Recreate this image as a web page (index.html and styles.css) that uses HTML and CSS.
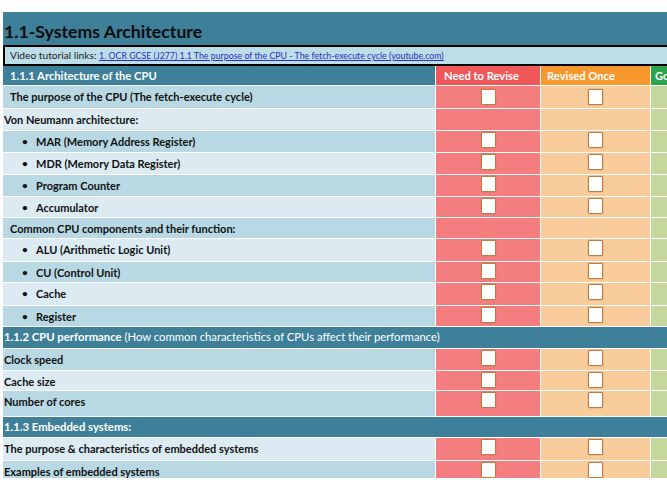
FILE: index.html
```html
<!DOCTYPE html>
<html lang="en">
<head>
<meta charset="utf-8">
<title>1.1-Systems Architecture</title>
<link rel="stylesheet" href="styles.css">
</head>
<body>
<div class="sheet">
  <div class="title">1.1-Systems Architecture</div>
  <div class="links">Video tutorial links: <a href="#">1. OCR GCSE (J277) 1.1 The purpose of the CPU - The fetch-execute cycle (youtube.com)</a></div>
  <div class="grid">
    <div class="hd hd-main">1.1.1 Architecture of the CPU</div>
    <div class="hd hd-red">Need to Revise</div>
    <div class="hd hd-orange">Revised Once</div>
    <div class="hd hd-green">Got it!</div>

    <div class="item dark ind">The purpose of the CPU (The fetch-execute cycle)</div>
    <div class="red"><span class="cb cb-low"></span></div>
    <div class="orange"><span class="cb cb-low"></span></div>
    <div class="green"></div>

    <div class="item light">Von Neumann architecture:</div>
    <div class="red"></div>
    <div class="orange"></div>
    <div class="green"></div>

    <div class="item dark"><span class="bul">•</span>MAR (Memory Address Register)</div>
    <div class="red"><span class="cb"></span></div>
    <div class="orange"><span class="cb"></span></div>
    <div class="green"></div>

    <div class="item light"><span class="bul">•</span>MDR (Memory Data Register)</div>
    <div class="red"><span class="cb"></span></div>
    <div class="orange"><span class="cb"></span></div>
    <div class="green"></div>

    <div class="item dark"><span class="bul">•</span>Program Counter</div>
    <div class="red"><span class="cb"></span></div>
    <div class="orange"><span class="cb"></span></div>
    <div class="green"></div>

    <div class="item light"><span class="bul">•</span>Accumulator</div>
    <div class="red"><span class="cb"></span></div>
    <div class="orange"><span class="cb"></span></div>
    <div class="green"></div>

    <div class="item dark ind">Common CPU components and their function:</div>
    <div class="red"></div>
    <div class="orange"></div>
    <div class="green"></div>

    <div class="item light"><span class="bul">•</span>ALU (Arithmetic Logic Unit)</div>
    <div class="red"><span class="cb"></span></div>
    <div class="orange"><span class="cb"></span></div>
    <div class="green"></div>

    <div class="item dark"><span class="bul">•</span>CU (Control Unit)</div>
    <div class="red"><span class="cb"></span></div>
    <div class="orange"><span class="cb"></span></div>
    <div class="green"></div>

    <div class="item light"><span class="bul">•</span>Cache</div>
    <div class="red"><span class="cb"></span></div>
    <div class="orange"><span class="cb"></span></div>
    <div class="green"></div>

    <div class="item dark"><span class="bul">•</span>Register</div>
    <div class="red"><span class="cb"></span></div>
    <div class="orange"><span class="cb"></span></div>
    <div class="green"></div>

    <div class="section"><b>1.1.2 CPU performance</b> (How common characteristics of CPUs affect their performance)</div>

    <div class="item dark">Clock speed</div>
    <div class="red"><span class="cb"></span></div>
    <div class="orange"><span class="cb"></span></div>
    <div class="green"></div>

    <div class="item light">Cache size</div>
    <div class="red"><span class="cb"></span></div>
    <div class="orange"><span class="cb"></span></div>
    <div class="green"></div>

    <div class="item dark tall">Number of cores</div>
    <div class="red"><span class="cb"></span></div>
    <div class="orange"><span class="cb"></span></div>
    <div class="green"></div>

    <div class="section"><b>1.1.3 Embedded systems:</b></div>

    <div class="item light">The purpose &amp; characteristics of embedded systems</div>
    <div class="red"><span class="cb"></span></div>
    <div class="orange"><span class="cb"></span></div>
    <div class="green"></div>

    <div class="item dark">Examples of embedded systems</div>
    <div class="red"><span class="cb"></span></div>
    <div class="orange"><span class="cb"></span></div>
    <div class="green"></div>
  </div>
</div>
</body>
</html>
```

FILE: styles.css
```css
html, body {
  margin: 0;
  padding: 0;
  background: #ffffff;
  overflow: hidden;
}

body {
  font-family: Lato, "Open Sans", "DejaVu Sans", sans-serif;
  color: #111111;
}

.sheet {
  width: 720px;
  padding: 12px 0 0 3px;
}

.title {
  height: 33px;
  box-sizing: border-box;
  background: #3e7f99;
  color: #0d0d0d;
  font-weight: 700;
  font-size: 17.7px;
  line-height: 20px;
  padding: 10px 0 0 1px;
}

.links {
  height: 21px;
  box-sizing: border-box;
  border: 2px solid #000000;
  background: #bddde8;
  font-size: 10.2px;
  line-height: 17px;
  padding-left: 5px;
  color: #1a1a1a;
  white-space: nowrap;
}

.links a {
  color: #2b2fc0;
  font-size: 8.8px;
  text-decoration: underline;
}

.grid {
  display: grid;
  grid-template-columns: 432px 104px 109px 80px;
  grid-template-rows: 19px 22px 21px 21px 21px 21px 20px 20px 22px 20px 22px 20px 21px 21px 19px 25px 20px 22px 17px;
  gap: 1px;
  background: #ffffff;
}

.hd {
  color: #ffffff;
  font-weight: 700;
  font-size: 11.2px;
  line-height: 19px;
  white-space: nowrap;
  overflow: hidden;
}

.hd-main {
  background: #3e7f99;
  padding-left: 7px;
}

.hd-red {
  background: #f05759;
  padding-left: 8px;
}

.hd-orange {
  background: #f6982d;
  padding-left: 6px;
}

.hd-green {
  background: #2ca44c;
  padding-left: 4px;
}

.item {
  font-weight: 700;
  font-size: 11px;
  line-height: 13px;
  padding: 4px 0 0 1px;
  white-space: nowrap;
  display: flex;
  align-items: flex-start;
}

.item.ind {
  padding-left: 7px;
}

.dark {
  background: #b8d8e4;
}

.light {
  background: #dbebf1;
}

.bul {
  display: inline-block;
  width: 14px;
  padding-left: 18px;
  font-size: 10px;
}

.red {
  background: #f47d7f;
  display: flex;
  justify-content: center;
  align-items: flex-start;
}

.orange {
  background: #f9cc9b;
  display: flex;
  justify-content: center;
  align-items: flex-start;
}

.green {
  background: #c4d79c;
}

.cb {
  width: 13px;
  height: 14px;
  margin-top: 1px;
  background: #ffffff;
  border: 1px solid #c17a44;
  border-radius: 1px;
  box-shadow: 0 0 0 0.5px rgba(193, 122, 68, 0.35);
}

.cb-low {
  margin-top: 3px;
}

.section {
  grid-column: 1 / -1;
  background: #3e7f99;
  color: #ffffff;
  font-size: 11.3px;
  line-height: 20px;
  padding-left: 1px;
  white-space: nowrap;
}

.section b {
  font-weight: 700;
}
```
